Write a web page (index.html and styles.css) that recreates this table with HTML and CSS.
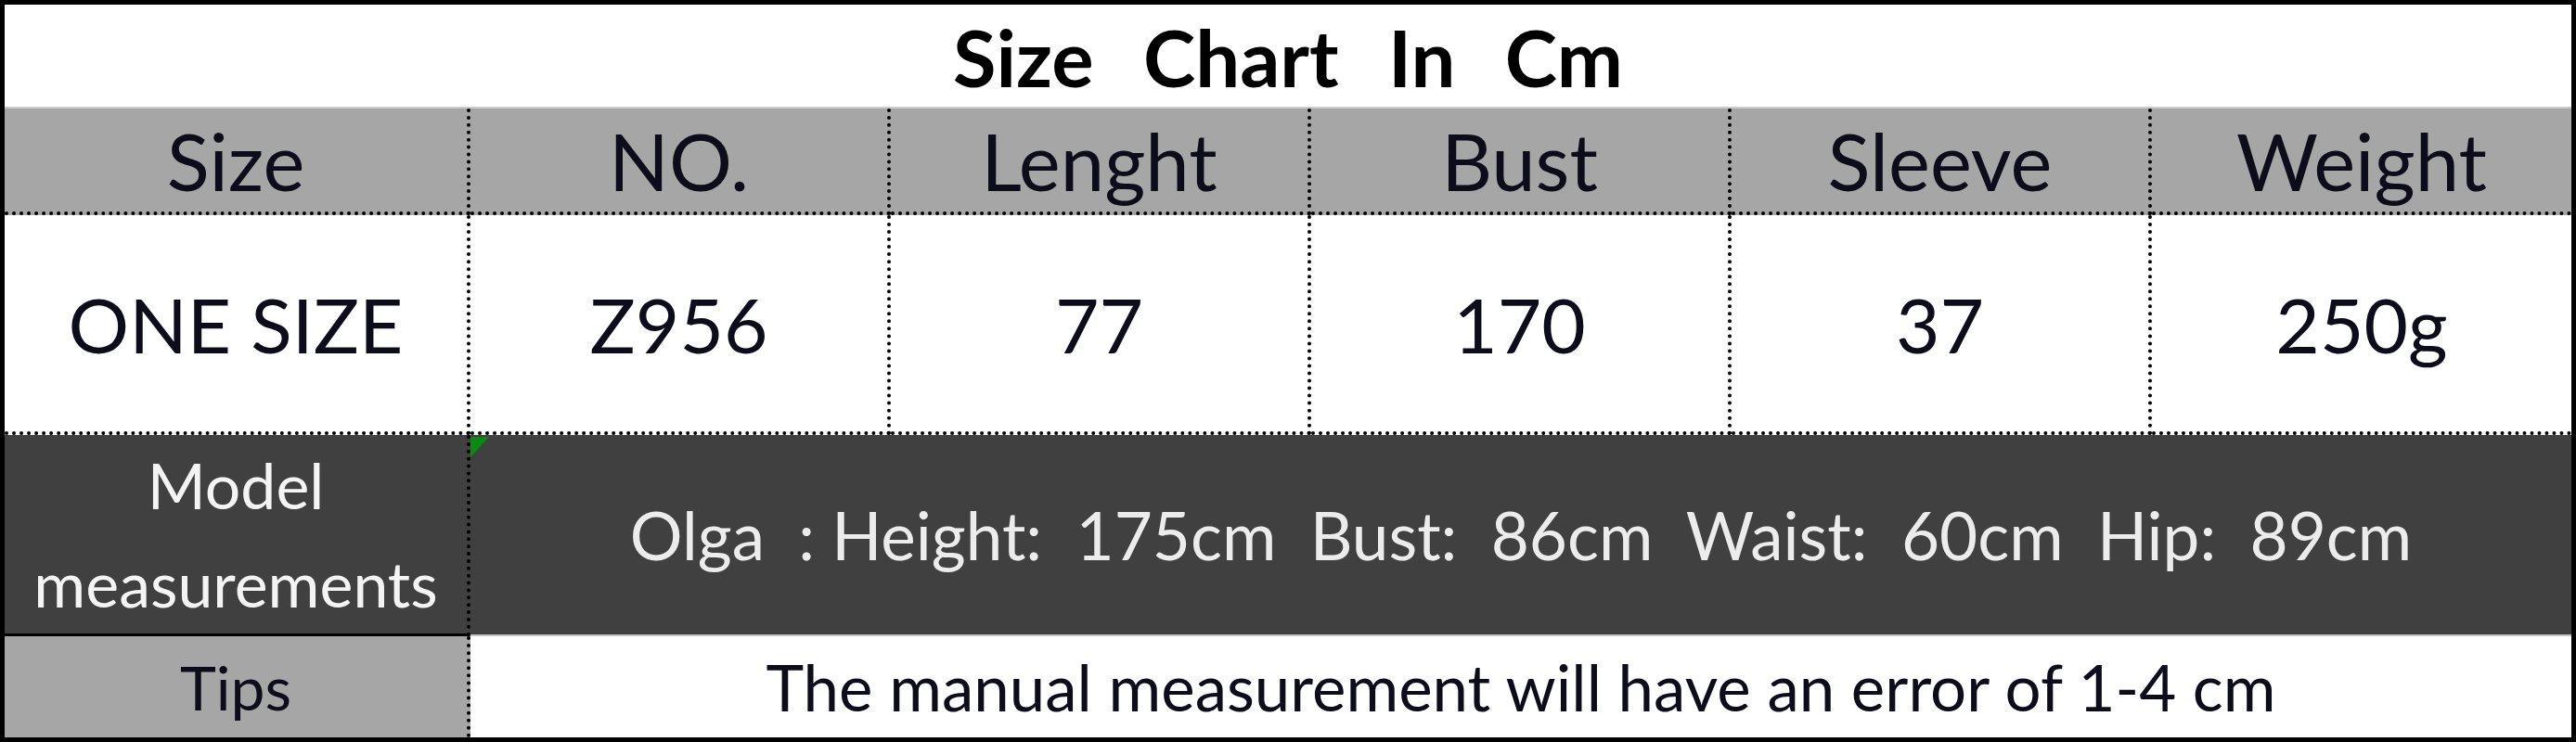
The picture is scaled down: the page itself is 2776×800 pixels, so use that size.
FILE: index.html
```html
<!DOCTYPE html>
<html>
<head>
<meta charset="utf-8">
<title>Size Chart In Cm</title>
<link rel="stylesheet" href="styles.css">
</head>
<body>
<div class="chart">
  <div class="cell title">Size  Chart  In  Cm</div>

  <div class="cell hd">Size</div>
  <div class="cell hd">NO.</div>
  <div class="cell hd">Lenght</div>
  <div class="cell hd">Bust</div>
  <div class="cell hd">Sleeve</div>
  <div class="cell hd last">Weight</div>

  <div class="cell dc">ONE SIZE</div>
  <div class="cell dc">Z956</div>
  <div class="cell dc">77</div>
  <div class="cell dc">170</div>
  <div class="cell dc">37</div>
  <div class="cell dc last">250g</div>

  <div class="cell ml">Model<br>measurements</div>
  <div class="cell mr"><span class="flag"></span>Olga  : Height:  175cm  Bust:  86cm  Waist:  60cm  Hip:  89cm</div>

  <div class="cell tl">Tips</div>
  <div class="cell tr">The manual measurement will have an error of 1-4 cm</div>
</div>
</body>
</html>
```
FILE: styles.css
```css
html, body {
  margin: 0;
  padding: 0;
  background: #ffffff;
}

.chart {
  box-sizing: border-box;
  width: 2776px;
  height: 800px;
  border: 5px solid #000;
  display: grid;
  grid-template-columns: 502px 453px 453px 453px 453px 1fr;
  grid-template-rows: 112px 115px 237px 217px 109px;
  font-family: Lato, "Noto Sans CJK SC", sans-serif;
  color: #0a0a0a;
}

.cell {
  box-sizing: border-box;
  display: flex;
  align-items: center;
  justify-content: center;
  text-align: center;
  white-space: pre;
}

.title {
  grid-column: 1 / -1;
  background: #fff;
  border-bottom: 2px solid #cccccc;
  font-weight: 700;
  font-size: 85px;
  word-spacing: 6px;
  color: #000;
  padding-top: 2px;
}

.hd {
  background: #a6a6a6;
  border-right: 4px dotted #000;
  border-bottom: 4px dotted #000;
  font-size: 85px;
  color: #0c0c1a;
}

.dc {
  background: #fff;
  border-right: 4px dotted #000;
  border-bottom: 4px dotted #000;
  font-size: 82px;
  color: #0c0c1a;
}

.last {
  border-right: none;
}

.ml {
  background: #404040;
  border-right: 4px dotted #000;
  border-bottom: 3px solid #000;
  color: #f4f4f4;
  font-size: 68px;
  line-height: 106px;
  white-space: normal;
}

.mr {
  grid-column: 2 / -1;
  position: relative;
  background: #404040;
  border-bottom: 2px solid #c4c4c4;
  color: #ececec;
  font-size: 71px;
}

.flag {
  position: absolute;
  left: 0;
  top: 2px;
  width: 0;
  height: 0;
  border-top: 22px solid #0b8a12;
  border-right: 20px solid transparent;
}

.tl {
  background: #a6a6a6;
  border-right: 4px dotted #000;
  font-size: 66px;
  color: #0c0c1a;
}

.tr {
  grid-column: 2 / -1;
  background: #fff;
  font-size: 69px;
  color: #0c0c1a;
}
```
